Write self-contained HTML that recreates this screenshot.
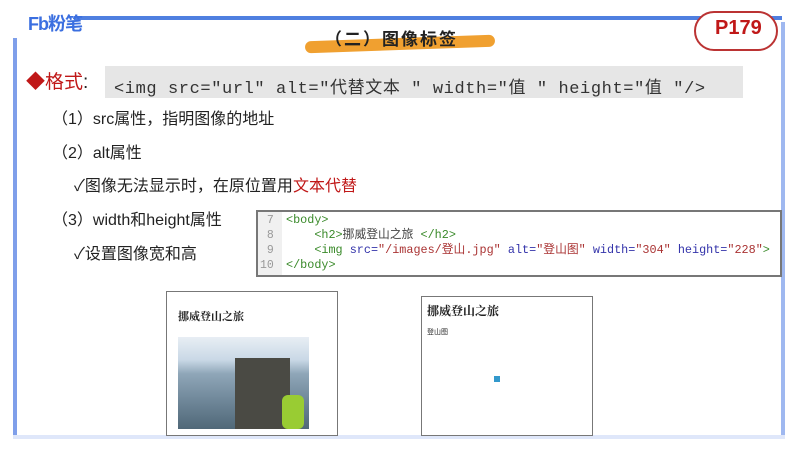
<!DOCTYPE html>
<html><head><meta charset="utf-8"><style>
*{margin:0;padding:0;box-sizing:border-box}
body{width:800px;height:450px;background:#fff;position:relative;overflow:hidden;font-family:"Liberation Sans","Noto Sans CJK SC",sans-serif;color:#222}
.a{position:absolute;white-space:nowrap}
.m{font-family:"Liberation Mono","Noto Sans CJK SC",monospace}
</style></head><body>
<div class="a" style="left:74px;top:16px;width:708px;height:4px;background:#4f7fe0"></div>
<div class="a" style="left:13px;top:38px;width:4px;height:400px;background:#7f9fea"></div>
<div class="a" style="left:781px;top:22px;width:4px;height:416px;background:#9fb8f0"></div>
<div class="a" style="left:13px;top:435px;width:772px;height:4px;background:#dfe7fa"></div>
<div class="a" style="left:28px;top:10px;font-size:18px;font-weight:bold;color:#3b6fe0;letter-spacing:-1px">Fb粉笔</div>
<div class="a" style="left:305px;top:38px;width:190px;height:12px;background:#f0a030;border-radius:6px;transform:rotate(-2deg)"></div>
<div class="a" style="left:325px;top:25px;font-size:17px;font-weight:bold;color:#222;letter-spacing:2px">（二）图像标签</div>
<div class="a" style="left:694px;top:11px;width:84px;height:40px;border:2px solid #b33;border-radius:20px;background:#fff"></div>
<div class="a" style="left:715px;top:17px;font-size:20px;font-weight:bold;color:#c01818">P179</div>
<div class="a" style="left:105px;top:66px;width:638px;height:32px;background:#e6e6e6"></div>
<div class="a m" style="left:114px;top:73px;font-size:17px;color:#333;letter-spacing:0.6px">&lt;img src="url" alt="代替文本 " width="值 " height="值 "/&gt;</div>
<div class="a" style="left:26px;top:67px;font-size:19px;color:#c01818">◆格式<span style="color:#222">:</span></div>
<div class="a" style="left:52px;top:105px;font-size:16px">（1）src属性，指明图像的地址</div>
<div class="a" style="left:52px;top:139px;font-size:16px">（2）alt属性</div>
<div class="a" style="left:74px;top:172px;font-size:16px">✓图像无法显示时，在原位置用<span style="color:#c01818">文本代替</span></div>
<div class="a" style="left:52px;top:206px;font-size:16px">（3）width和height属性</div>
<div class="a" style="left:74px;top:240px;font-size:16px">✓设置图像宽和高</div>
<div class="a" style="left:256px;top:210px;width:526px;height:67px;border:2px solid #777;background:#fff"></div>
<div class="a" style="left:258px;top:212px;width:24px;height:63px;background:#f0f0f0"></div>
<div class="a m" style="left:260px;top:213px;font-size:11.5px;line-height:15px;color:#999">&nbsp;7<br>&nbsp;8<br>&nbsp;9<br>10</div>
<div class="a m" style="left:286px;top:213px;font-size:11.8px;line-height:15px;color:#3a8a2a">&lt;body&gt;<br>&nbsp;&nbsp;&nbsp;&nbsp;&lt;h2&gt;<span style="color:#444">挪威登山之旅 </span>&lt;/h2&gt;<br>&nbsp;&nbsp;&nbsp;&nbsp;&lt;img <span style="color:#33a">src=</span><span style="color:#a33">"/images/登山.jpg"</span> <span style="color:#33a">alt=</span><span style="color:#a33">"登山图"</span> <span style="color:#33a">width=</span><span style="color:#a33">"304"</span> <span style="color:#33a">height=</span><span style="color:#a33">"228"</span>&gt;<br>&lt;/body&gt;</div>
<div class="a" style="left:166px;top:291px;width:172px;height:145px;border:1.5px solid #777"></div>
<div class="a" style="left:178px;top:308px;font-size:11px;font-weight:bold;font-family:'Noto Serif CJK SC',serif">挪威登山之旅</div>
<div class="a" style="left:178px;top:337px;width:131px;height:92px;background:linear-gradient(#e8eef4 0%,#c9d8e6 25%,#8fa6b8 40%,#6e8698 70%,#506878 100%)"></div>
<div class="a" style="left:235px;top:358px;width:55px;height:71px;background:#4a4a44"></div>
<div class="a" style="left:282px;top:395px;width:22px;height:34px;background:#9c3;border-radius:6px"></div>
<div class="a" style="left:421px;top:296px;width:172px;height:140px;border:1.5px solid #777"></div>
<div class="a" style="left:427px;top:302px;font-size:12px;font-weight:bold;font-family:'Noto Serif CJK SC',serif">挪威登山之旅</div>
<div class="a" style="left:427px;top:327px;font-size:7px">登山图</div>
<div class="a" style="left:494px;top:376px;width:6px;height:6px;background:#39c"></div>
</body></html>
